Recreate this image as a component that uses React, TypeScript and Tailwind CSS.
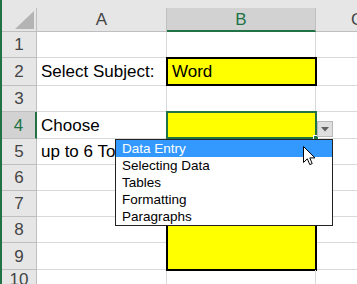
const rowHeights = ["h-[26px]", "h-[28px]", "h-[26px]", "h-[27px]", "h-[26px]", "h-[26px]", "h-[26px]", "h-[26px]", "h-[27px]", "h-[20px]"];

const colA: Record<number, string> = {
  2: "Select Subject:",
  4: "Choose",
  5: "up to 6 Topics",
};

const items: readonly string[] = ["Data Entry", "Selecting Data", "Tables", "Formatting", "Paragraphs"];

function bCellClass(r: number) {
  if (r === 2) return "bg-[#ffff00] border-2 border-black -ml-px -mt-px h-[calc(100%+1px)] w-[calc(100%+2px)]";
  if (r === 4) return "bg-[#ffff00] border-2 border-[#217346] -ml-px -mt-px h-[calc(100%+1px)] w-[calc(100%+2px)]";
  if (r > 4 && r < 9) return "bg-[#ffff00] border-x-2 border-black -ml-px w-[calc(100%+2px)] h-full";
  if (r === 9) return "bg-[#ffff00] border-x-2 border-b-2 border-black -ml-px w-[calc(100%+2px)] h-[calc(100%+1px)]";
  return "border-r border-b border-[#d9d9d9] h-full";
}

export default function App() {
  return (
    <div className="relative w-[357px] h-[284px] overflow-hidden bg-white flex font-['Liberation_Sans',sans-serif]">
      <div className="w-[2px] shrink-0 bg-[#217346]" />
      <div className="flex-1 flex flex-col">
        <div className="h-[8px] shrink-0 bg-[#e6e6e6]" />

        {/* column headers */}
        <div className="flex h-[24px] shrink-0 text-[17px] leading-none">
          <div className="relative w-[35px] shrink-0 bg-[#e6e6e6] border-r border-b border-[#bfbfbf]">
            <svg className="absolute right-[2px] bottom-[2px]" width="19" height="18" viewBox="0 0 19 18">
              <polygon points="19,0 19,18 0,18" fill="#b4b4b4" />
            </svg>
          </div>
          <div className="w-[130px] shrink-0 bg-[#e6e6e6] border-r border-b border-[#bfbfbf] flex items-center justify-center text-[#444]">A</div>
          <div className="w-[149px] shrink-0 bg-[#d2d2d2] border-r border-[#bfbfbf] border-b-2 border-b-[#217346] flex items-center justify-center text-[#217346]">B</div>
          <div className="flex-1 bg-[#e6e6e6] border-b border-[#bfbfbf] flex items-center pl-[35px] text-[#444]">C</div>
        </div>

        {rowHeights.map((h, i) => {
          const r = i + 1;
          return (
            <div key={r} className={`flex ${h} shrink-0 text-[17px] leading-none`}>
              <div
                className={`w-[35px] shrink-0 flex items-center justify-center border-b border-[#bfbfbf] ${
                  r === 4 ? "bg-[#d2d2d2] text-[#217346] border-r-2 border-r-[#217346]" : "bg-[#e6e6e6] text-[#444] border-r border-r-[#bfbfbf]"
                }`}
              >
                {r}
              </div>
              <div className="w-[130px] shrink-0 border-r border-b border-[#d9d9d9] flex items-center pl-[4px] whitespace-nowrap overflow-visible text-black">
                {colA[r]}
              </div>
              <div className="w-[149px] shrink-0 relative z-10">
                <div className={`${bCellClass(r)} flex items-center pl-[4px] text-black`}>{r === 2 ? "Word" : ""}</div>
              </div>
              <div className="flex-1 border-b border-[#d9d9d9]" />
            </div>
          );
        })}
      </div>

      {/* fill handle */}
      <div className="absolute left-[313px] top-[135px] w-[6px] h-[6px] bg-[#217346] border border-white z-20" />

      {/* dropdown button */}
      <div className="absolute left-[317px] top-[121px] w-[16px] h-[16px] bg-[#dedede] border border-[#b9b9b9] flex items-center justify-center z-20">
        <svg width="8" height="5" viewBox="0 0 8 5">
          <polygon points="0,0 8,0 4,4.5" fill="#5f5f5f" />
        </svg>
      </div>

      {/* dropdown list */}
      <div className="absolute left-[115px] top-[139px] w-[218px] h-[87px] bg-white border border-[#222] z-30 text-[13.5px] leading-[17px] font-['Liberation_Sans',sans-serif]">
        {items.map((it, i) => (
          <div key={it} className={`h-[17px] pl-[6px] ${i === 0 ? "bg-[#3399ff] text-white" : "text-black"}`}>
            {it}
          </div>
        ))}
      </div>

      {/* mouse cursor */}
      <svg className="absolute left-[303px] top-[146px] z-40" width="13" height="20" viewBox="0 0 13 20">
        <path d="M0.5 0.5 L0.5 16.5 L4.3 12.8 L6.8 18.6 L9.2 17.6 L6.8 11.9 L12 11.9 Z" fill="white" stroke="black" strokeWidth="1" strokeLinejoin="miter" />
      </svg>
    </div>
  );
}
